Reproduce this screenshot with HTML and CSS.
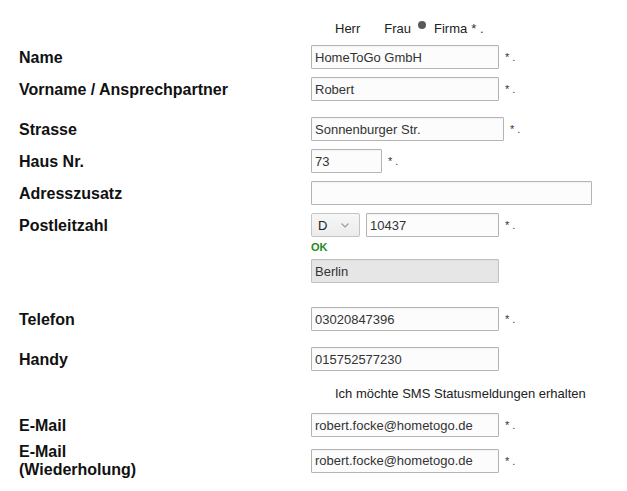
FILE: index.html
```html
<!DOCTYPE html>
<html lang="de">
<head>
<meta charset="utf-8">
<title>Formular</title>
<link rel="stylesheet" href="styles.css">
</head>
<body>
<div class="form">
  <div class="row radio-row">
    <div class="label"></div>
    <div class="field">
      <span class="opt opt-herr">Herr</span>
      <span class="opt opt-frau">Frau</span>
      <span class="dot"></span>
      <span class="opt opt-firma">Firma</span>
      <span class="req">* .</span>
    </div>
  </div>

  <div class="row r-name">
    <div class="label">Name</div>
    <div class="field"><input class="inp w187" type="text" value="HomeToGo GmbH"><span class="req">* .</span></div>
  </div>

  <div class="row r-gap8">
    <div class="label">Vorname / Ansprechpartner</div>
    <div class="field"><input class="inp w187" type="text" value="Robert"><span class="req">* .</span></div>
  </div>

  <div class="row r-gap16">
    <div class="label">Strasse</div>
    <div class="field"><input class="inp w192" type="text" value="Sonnenburger Str."><span class="req">* .</span></div>
  </div>

  <div class="row r-gap8">
    <div class="label">Haus Nr.</div>
    <div class="field"><input class="inp w70" type="text" value="73"><span class="req">* .</span></div>
  </div>

  <div class="row r-gap8">
    <div class="label">Adresszusatz</div>
    <div class="field"><input class="inp w280" type="text" value=""></div>
  </div>

  <div class="row r-gap8">
    <div class="label">Postleitzahl</div>
    <div class="field">
      <div class="select"><span class="sel-text">D</span><svg class="chev" width="8" height="5" viewBox="0 0 8 5"><path d="M0.5 0.5 L4 4 L7.5 0.5" fill="none" stroke="#9a9a9a" stroke-width="1.1"/></svg></div>
      <input class="inp w132" type="text" value="10437"><span class="req">* .</span>
    </div>
  </div>

  <div class="row r-ok">
    <div class="label"></div>
    <div class="field"><span class="ok">OK</span></div>
  </div>

  <div class="row r-city">
    <div class="label"></div>
    <div class="field"><input class="inp w187 ro" type="text" value="Berlin" readonly></div>
  </div>

  <div class="row r-tel">
    <div class="label">Telefon</div>
    <div class="field"><input class="inp w187" type="text" value="03020847396"><span class="req">* .</span></div>
  </div>

  <div class="row r-handy">
    <div class="label">Handy</div>
    <div class="field"><input class="inp w187" type="text" value="015752577230"></div>
  </div>

  <div class="row r-sms">
    <div class="label"></div>
    <div class="field"><span class="sms">Ich möchte SMS Statusmeldungen erhalten</span></div>
  </div>

  <div class="row r-mail">
    <div class="label">E-Mail</div>
    <div class="field"><input class="inp w187" type="text" value="robert.focke@hometogo.de"><span class="req">* .</span></div>
  </div>

  <div class="row r-mail2">
    <div class="label two">E-Mail<br>(Wiederholung)</div>
    <div class="field"><input class="inp w187" type="text" value="robert.focke@hometogo.de"><span class="req">* .</span></div>
  </div>
</div>
</body>
</html>
```

FILE: styles.css
```css
html, body {
  margin: 0;
  padding: 0;
  background: #ffffff;
}

body {
  font-family: "Liberation Sans", Arial, sans-serif;
  color: #111111;
}

.form {
  display: flex;
  flex-direction: column;
}

.row {
  display: flex;
  align-items: center;
  min-height: 24px;
}

.label {
  width: 311px;
  flex: none;
  box-sizing: border-box;
  padding-left: 19px;
  padding-top: 1px;
  font-size: 16px;
  font-weight: bold;
  line-height: 18px;
  color: #111111;
}

.field {
  display: flex;
  align-items: center;
  font-size: 13px;
  color: #222222;
}

.inp {
  box-sizing: border-box;
  height: 24px;
  margin: 0;
  padding: 0 3px;
  border: 1px solid #b4b4b4;
  border-radius: 1px;
  background: #fcfcfc;
  font-family: "Liberation Sans", Arial, sans-serif;
  font-size: 13px;
  color: #333333;
  outline: none;
  box-shadow: inset 0 1px 1px rgba(0,0,0,0.04);
}

.ro {
  background: #e6e6e6;
  border-color: #c2c2c2;
}

.w187 { width: 188px; }
.w192 { width: 193px; }
.w70 { width: 71px; }
.w280 { width: 281px; }
.w132 { width: 133px; }

.req {
  margin-left: 6px;
  font-size: 11px;
  color: #333333;
  white-space: pre;
}

.radio-row {
  margin-top: 21px;
  min-height: 16px;
  line-height: 16px;
}

.opt {
  font-size: 13px;
  color: #222222;
}

.opt-herr { margin-left: 24px; }
.opt-frau { margin-left: 24px; }

.dot {
  width: 8px;
  height: 8px;
  border-radius: 50%;
  background: #5a5a5a;
  margin-left: 7px;
  margin-right: 8px;
  align-self: flex-start;
}

.opt-firma + .req { margin-left: 4px; font-size: 13px; }

.r-name { margin-top: 8px; }
.r-gap8 { margin-top: 8px; }
.r-gap16 { margin-top: 16px; }

.select {
  box-sizing: border-box;
  width: 49px;
  height: 24px;
  border: 1px solid #c4c4c4;
  border-radius: 2px;
  background: linear-gradient(#f7f7f7, #ececec);
  display: flex;
  align-items: center;
  justify-content: space-between;
  padding: 0 10px 0 6px;
  margin-right: 6px;
  font-size: 13px;
  color: #222222;
}

.chev { display: block; }

.r-ok {
  margin-top: 4px;
  min-height: 13px;
}

.ok {
  font-size: 11px;
  font-weight: bold;
  line-height: 13px;
  color: #1f8a1f;
}

.r-city { margin-top: 5px; }
.r-tel { margin-top: 24px; }
.r-handy { margin-top: 16px; }

.r-sms {
  margin-top: 15px;
  min-height: 16px;
}

.sms {
  margin-left: 24px;
  font-size: 13px;
  line-height: 16px;
  color: #222222;
}

.r-mail { margin-top: 11px; }
.r-mail2 { margin-top: 5px; }
```
